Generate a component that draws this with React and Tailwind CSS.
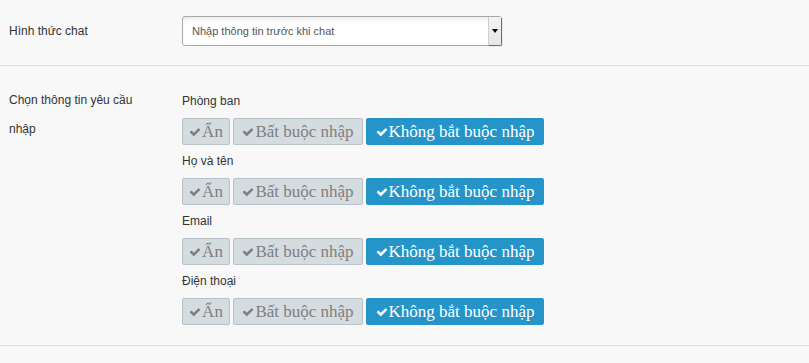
import React from 'react';

const fields = ['Phòng ban', 'Họ và tên', 'Email', 'Điện thoại'];

function CheckIcon({ className }) {
  return (
    <svg viewBox="0 0 1792 1792" className={className} fill="currentColor">
      <path d="M1671 566q0 40-28 68l-724 724-136 136q-28 28-68 28t-68-28l-136-136-362-362q-28-28-28-68t28-68l136-136q28-28 68-28t68 28l294 295 656-657q28-28 68-28t68 28l136 136q28 28 28 68z" />
    </svg>
  );
}

function OptionButton({ label, active, width }) {
  return (
    <button
      type="button"
      className={`flex items-center justify-center h-[27px] ${width} border rounded-[2px] text-[17px] leading-none ${
        active
          ? 'bg-[#2494c9] border-[#2494c9] text-white'
          : 'bg-[#d5dce0] border-[#b8c3c9] text-[#7f7f7f]'
      }`}
      style={{ fontFamily: '"Liberation Serif", "DejaVu Serif", serif' }}
    >
      <CheckIcon className="w-[12px] h-[12px] mr-[1px]" />
      {label}
    </button>
  );
}

export default function App() {
  return (
    <div
      className="w-[809px] h-[363px] bg-[#f8f8f8] text-[#333] text-[12px]"
      style={{ fontFamily: '"Liberation Sans", Arial, sans-serif' }}
    >
      {/* Hình thức chat */}
      <div className="flex items-center pt-[16px] pb-[19px] border-b border-[#dddddd]">
        <div className="w-[182px] pl-[9px]">Hình thức chat</div>
        <div className="relative w-[320px] h-[30px] bg-white border border-[#a9a9a9] rounded-[3px] shadow-[inset_0_4px_6px_-3px_rgba(0,0,0,0.12)] flex items-center">
          <span className="pl-[9px] text-[11px] text-[#555]">Nhập thông tin trước khi chat</span>
          <div className="absolute right-0 top-0 bottom-0 w-[13px] bg-gradient-to-b from-[#f4f4f4] to-[#e6e6e6] border-l border-[#d0d0d0] shadow-[1px_1px_1px_rgba(0,0,0,0.35)] flex items-center justify-center">
            <div className="w-0 h-0 border-l-[3px] border-r-[3px] border-t-[4px] border-l-transparent border-r-transparent border-t-black" />
          </div>
        </div>
      </div>

      {/* Chọn thông tin yêu cầu nhập */}
      <div className="flex pb-[20px] border-b border-[#dddddd]">
        <div className="w-[182px] pl-[9px] pt-[20px] leading-[29px]">
          Chọn thông tin yêu cầu
          <br />
          nhập
        </div>
        <div className="pt-[27px] flex flex-col gap-[8px]">
          {fields.map((f) => (
            <div key={f}>
              <div className="h-[17px] leading-[17px]">{f}</div>
              <div className="mt-[8px] flex gap-[3px]">
                <OptionButton label="Ẩn" width="w-[48px]" />
                <OptionButton label="Bất buộc nhập" width="w-[130px]" />
                <OptionButton label="Không bắt buộc nhập" width="w-[178px]" active />
              </div>
            </div>
          ))}
        </div>
      </div>
    </div>
  );
}
